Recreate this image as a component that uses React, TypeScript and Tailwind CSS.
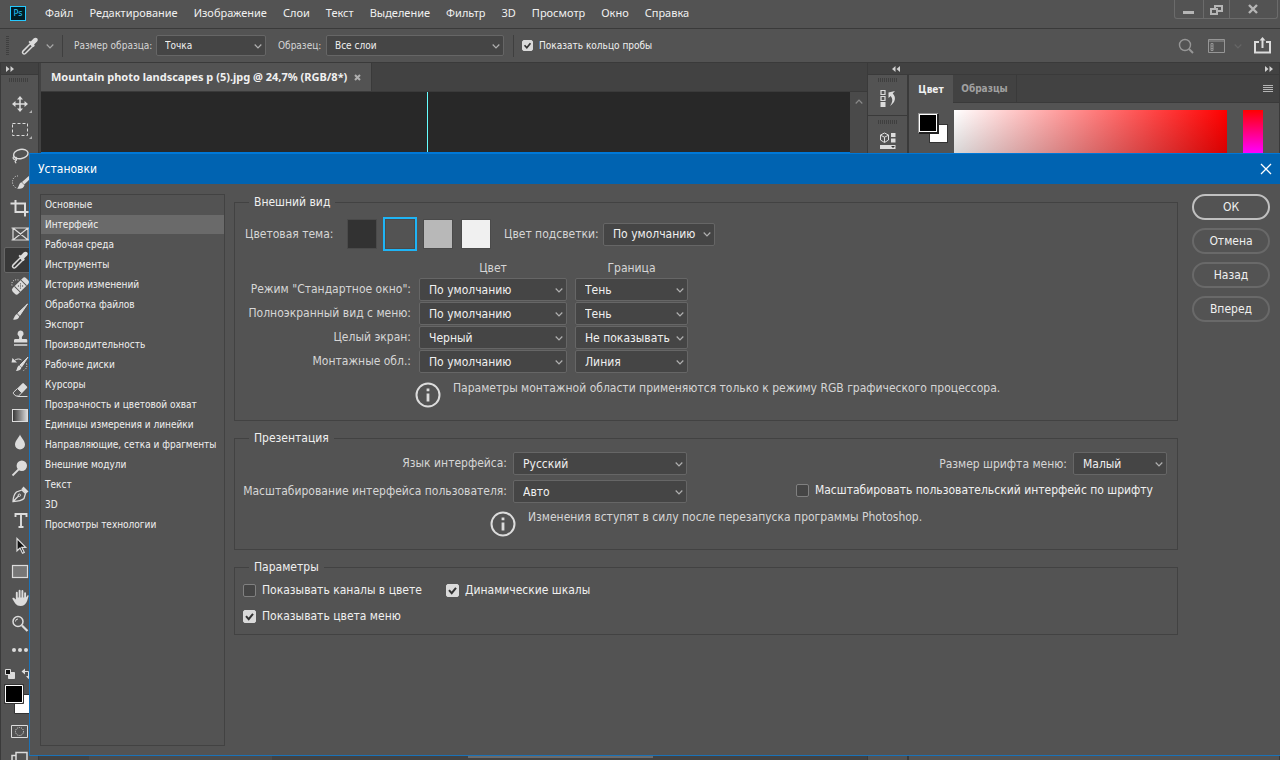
import React from 'react'
import clsx from 'clsx'

const MENU = [
  'Файл',
  'Редактирование',
  'Изображение',
  'Слои',
  'Текст',
  'Выделение',
  'Фильтр',
  '3D',
  'Просмотр',
  'Окно',
  'Справка',
]

const SECTIONS = [
  'Основные',
  'Интерфейс',
  'Рабочая среда',
  'Инструменты',
  'История изменений',
  'Обработка файлов',
  'Экспорт',
  'Производительность',
  'Рабочие диски',
  'Курсоры',
  'Прозрачность и цветовой охват',
  'Единицы измерения и линейки',
  'Направляющие, сетка и фрагменты',
  'Внешние модули',
  'Текст',
  '3D',
  'Просмотры технологии',
]

const SCREEN_MODES = [
  { id: 'standard', label: 'Режим "Стандартное окно":', color: 'По умолчанию', edge: 'Тень' },
  { id: 'fullmenu', label: 'Полноэкранный вид с меню:', color: 'По умолчанию', edge: 'Тень' },
  { id: 'full', label: 'Целый экран:', color: 'Черный', edge: 'Не показывать' },
  { id: 'artboards', label: 'Монтажные обл.:', color: 'По умолчанию', edge: 'Линия' },
]

const THEMES = [
  { name: 'darkest', className: 'bg-[#323232]' },
  { name: 'dark', className: 'bg-[#535353]' },
  { name: 'light', className: 'bg-[#b8b8b8]' },
  { name: 'lightest', className: 'bg-[#f0f0f0]' },
]

const EYEDROPPER = (
  <>
    <path d="M5 19.500c-.8-.8-.5-1.800 0-2.400l7.300-7.300 2.400 2.400-7.300 7.300c-.7.6-1.700.7-2.400 0z" fill="none" strokeWidth="1.500" />
    <path d="M10.500 8l1.300-1.200 1 .6 2.800-2.800c1-1 2.500-1.300 3.500-.3s.8 2.500-.2 3.500l-2.800 2.800.7 1.100-1.200 1.300z" fill="#dcdcdc" stroke="none" />
  </>
)

const TOOLS: { name: string; more?: boolean; active?: boolean; icon: React.ReactNode }[] = [
  {
    name: 'move',
    more: true,
    icon: (
      <>
        <path d="M12 6v12M6 12h12" strokeWidth="1.500" />
        <path d="M12 4l3 3.500H9zM12 20l3-3.500H9zM4 12l3.500-3v6zM20 12l-3.500-3v6z" fill="#dcdcdc" stroke="none" />
      </>
    ),
  },
  { name: 'marquee', more: true, icon: <rect x="4.500" y="5.500" width="15" height="12" strokeDasharray="3 2" /> },
  {
    name: 'lasso',
    icon: (
      <>
        <ellipse cx="12.800" cy="10" rx="7.300" ry="4.600" transform="rotate(-10 12.800 10)" strokeWidth="1.400" />
        <path d="M6 12.500c-1.500.8-1 2.800.5 2.800s2.300-1.300 1.200-2.200c1.500 1.500 1 3.200-.2 3.600s.3 1.800.6 2.600" strokeWidth="1.200" />
      </>
    ),
  },
  {
    name: 'quick selection',
    icon: (
      <>
        <path d="M10 6a5 6 0 1 0-1 12" strokeDasharray="1 1.400" />
        <path d="M22 5l-8 7 2.200 2.500L23 8z" fill="#dcdcdc" stroke="none" />
        <path d="M13.500 12.200l3 3.100c-1 3.200-4 4.200-7.500 3.200 2-.8 1.500-5.300 4.500-6.300z" fill="#dcdcdc" stroke="none" />
      </>
    ),
  },
  { name: 'crop', icon: <path d="M7.500 4v12h13M2.500 7.500H17v13" strokeWidth="2" /> },
  { name: 'frame', icon: <path d="M5 6h15v12H5zM5 6l15 12M20 6L5 18M3.500 6h3M18.500 6h3M3.500 18h3M18.500 18h3" strokeWidth="1.200" /> },
  { name: 'eyedropper', active: true, icon: EYEDROPPER },
  {
    name: 'healing brush',
    icon: (
      <>
        <path d="M4 11.500c-1-4 2-6.500 6.500-5.500" strokeDasharray="1 1.400" />
        <g transform="rotate(-45 12.500 12)">
          <rect x="3" y="8" width="19" height="8" rx="2.500" fill="#dcdcdc" stroke="none" />
          <path d="M8 8v8M17 8v8" stroke="#535353" />
          <path d="M10.500 10.500h1M13.500 10.500h1M12 12h1M10.500 13.500h1M13.500 13.500h1" stroke="#333" />
        </g>
      </>
    ),
  },
  {
    name: 'brush',
    icon: (
      <>
        <path d="M19.500 4L9.800 13.200l2 2.200z" fill="#dcdcdc" stroke="#dcdcdc" />
        <path d="M9 14l2.300 2.400c-.7 3-4 3.600-6.500 3.100 1.800-1 1.400-4.500 4.200-5.500z" fill="#dcdcdc" stroke="none" />
      </>
    ),
  },
  {
    name: 'clone stamp',
    icon: <path d="M12.500 4.500a3.200 3.200 0 0 1 2 5.600c-.8.900-.8 2.200-.3 3h3.600c1 0 1.500.5 1.500 1.500v2H6v-2c0-1 .5-1.500 1.500-1.500h3.400c.5-.8.5-2.100-.3-3a3.200 3.200 0 0 1 1.900-5.600zM6 18.300h13.300v1.400H6z" fill="#dcdcdc" stroke="none" />,
  },
  {
    name: 'history brush',
    icon: (
      <>
        <path d="M20 5l-8 8 1.800 1.800z" fill="#dcdcdc" />
        <path d="M11.300 13.300l2.200 2.300c-.7 2.600-3 3.600-5.700 3.200 1.500-.9 1-4.300 3.500-5.500z" fill="#dcdcdc" stroke="none" />
        <path d="M3.500 10.500l1-4.500 4.500 4.500z" fill="#dcdcdc" stroke="none" />
        <path d="M7 8c2.500-1.500 5-1.200 6.500 0" />
        <path d="M18.500 11.500c1 3 0 5.500-3 7" strokeDasharray="1 1.500" />
      </>
    ),
  },
  {
    name: 'eraser',
    icon: (
      <>
        <path d="M9.500 10.200L14.300 5.500q.8-.8 1.600 0l3 3q.8.8 0 1.600l-4.800 4.800z" fill="#dcdcdc" stroke="none" />
        <path d="M9.500 10.500l4.300 4.300-3.300 3.200H7.800l-2.200-2.200q-.8-.8 0-1.600z" />
        <path d="M9.500 18.500h10" />
      </>
    ),
  },
  {
    name: 'gradient',
    icon: (
      <>
        <defs>
          <linearGradient id="toolGradient">
            <stop offset="0" stopColor="#333" />
            <stop offset="1" stopColor="#ddd" />
          </linearGradient>
        </defs>
        <rect x="4.500" y="5.500" width="15" height="12" fill="url(#toolGradient)" />
      </>
    ),
  },
  { name: 'blur', icon: <path d="M12 4.500c1 3 5 6.300 5 10a5 5 0 0 1-10 0c0-3.700 4-7 5-10z" fill="#dcdcdc" stroke="none" /> },
  {
    name: 'dodge',
    icon: (
      <>
        <circle cx="13.800" cy="9.800" r="5.200" fill="#dcdcdc" stroke="none" />
        <path d="M11 13l-6.500 6.500" strokeWidth="1.800" />
      </>
    ),
  },
  {
    name: 'pen',
    icon: (
      <>
        <path d="M5 19.500c.2-4.500 1.200-7.500 3.500-9.500l5.500-2 3.500 3.500-1.500 5c-2 2-6.500 2.800-11 3zM5 19.500l5.800-5.800" strokeWidth="1.300" />
        <circle cx="11.300" cy="13.200" r="1.200" />
        <path d="M13.500 7l2-2.500 5 5-2.500 2z" fill="#dcdcdc" stroke="none" />
      </>
    ),
  },
  { name: 'type', icon: <path d="M7.500 9V6h11v3M13 6v13M10.500 19h5" strokeWidth="1.900" /> },
  { name: 'path selection', icon: <path d="M9 4.500v12.300l3-2.700 2.500 5.200 1.800-.9-2.500-5h3.900z" fill="#111" strokeWidth="1.200" /> },
  { name: 'rectangle', icon: <rect x="4.500" y="5.500" width="15" height="12" fill="#777" strokeWidth="1.200" /> },
  {
    name: 'hand',
    icon: (
      <>
        <path d="M8.800 12.500V6.800M11.600 12V4.800M14.400 12V5M17.100 13V7.200" strokeWidth="1.900" strokeLinecap="round" />
        <path d="M8 11.500h10l1.300-1.800c.7-.8 1.600-.2 1.200.8-1.200 3.200-1.700 9.500-8 9.500-4.500 0-5.500-3-8-7-.5-1 .8-1.600 1.600-1L8 13.500z" fill="#dcdcdc" stroke="none" />
      </>
    ),
  },
  {
    name: 'zoom',
    icon: (
      <>
        <circle cx="10" cy="9.500" r="5" strokeWidth="1.500" />
        <path d="M7.500 9.500A2.500 2.500 0 0 1 10 7" strokeWidth="1" />
        <path d="M14 13.500l5.500 5.500" strokeWidth="2.200" />
      </>
    ),
  },
  {
    name: 'edit toolbar',
    icon: (
      <g fill="#dcdcdc" stroke="none">
        <circle cx="6" cy="12" r="2" />
        <circle cx="12" cy="12" r="2" />
        <circle cx="18" cy="12" r="2" />
      </g>
    ),
  },
]

function Chevron({ className }: { className?: string }) {
  return (
    <svg className={className} width="8" height="6" viewBox="0 0 8 6" fill="none" stroke="currentColor" strokeWidth="1.200">
      <path d="M.7 1.500l3.300 3.300 3.300-3.300" />
    </svg>
  )
}

function Select({
  id,
  label,
  value,
  small,
  className,
}: {
  id?: string
  label?: string
  value: string
  small?: boolean
  className?: string
}) {
  return (
    <div className={clsx('relative', className)}>
      <select
        id={id}
        aria-label={label}
        className={clsx(
          'block w-full appearance-none rounded-[2px] border border-[#666] bg-[#454545] text-[#f0f0f0] outline-none',
          small ? 'h-[21px] pl-2 text-[10px]' : 'h-[23px] pl-[9px] text-xs leading-4',
        )}
      >
        <option>{value}</option>
      </select>
      <Chevron className="absolute top-1/2 right-1 -translate-y-1/2 text-[#b0b0b0] pointer-events-none" />
    </div>
  )
}

function Checkbox({
  label,
  checked = false,
  small,
}: {
  label: string
  checked?: boolean
  small?: boolean
}) {
  const [on, setOn] = React.useState(checked)

  return (
    <label className="flex items-center gap-[6px] text-[#f0f0f0]">
      <span className={clsx('grid shrink-0', small ? 'size-[11px]' : 'size-[13px]')}>
        <input
          type="checkbox"
          checked={on}
          onChange={(e) => setOn(e.currentTarget.checked)}
          className="col-start-1 row-start-1 appearance-none rounded-[2px] border border-[#808080] bg-[#454545] checked:border-[#dadada] checked:bg-[#dadada]"
        />
        {on && (
          <svg className="w-full h-full col-start-1 row-start-1 pointer-events-none" viewBox="0 0 13 13" fill="none" stroke="#333" strokeWidth="2">
            <path d="M3 6.200l2.700 3L10 3.800" />
          </svg>
        )}
      </span>
      {label}
    </label>
  )
}

function Group({
  title,
  className,
  children,
}: {
  title: string
  className?: string
  children: React.ReactNode
}) {
  return (
    <fieldset className={clsx('min-w-0 border border-[#424242]', className)}>
      <legend className="ml-[14px] px-[5px] leading-4 text-[#f0f0f0]">{title}</legend>
      {children}
    </fieldset>
  )
}

function Info({ className, children }: { className?: string; children: React.ReactNode }) {
  return (
    <div className={clsx('flex items-start gap-3', className)}>
      <svg className="shrink-0" width="26" height="26" viewBox="0 0 26 26" fill="none" stroke="#dcdcdc">
        <circle cx="13" cy="13" r="11.500" strokeWidth="2" />
        <path d="M13 11.500v8M13 6.500v2.800" strokeWidth="2.800" />
      </svg>
      <p className="leading-3">{children}</p>
    </div>
  )
}

function Grip({ className }: { className?: string }) {
  return (
    <div
      className={clsx(
        'h-[4px] w-5 shrink-0 bg-[repeating-linear-gradient(90deg,#3f3f3f_0_1px,transparent_1px_2px)]',
        className,
      )}
    />
  )
}

function DoubleArrow({ className }: { className?: string }) {
  return (
    <svg className={className} width="8" height="6" viewBox="0 0 8 6" fill="#d0d0d0">
      <path d="M0 0l3.500 3L0 6zM4.500 0L8 3 4.500 6z" />
    </svg>
  )
}

function TopBar() {
  return (
    <header className="flex h-7 shrink-0 items-start justify-between pl-[10px]">
      <div className="flex items-center">
        <div className="flex mt-[5px] h-[15px] w-4 items-center justify-center border border-[#26c9ff] bg-[#001d26] text-[9px] leading-none text-[#26c9ff]">
          Ps
        </div>
        <nav className="mt-[5px] ml-[19px] flex gap-4 font-['Noto_Sans',sans-serif] text-[11px] leading-4 text-[#f0f0f0]">
          {MENU.map((item) => (
            <button key={item}>{item}</button>
          ))}
        </nav>
      </div>
      <div className="mr-[2px] flex h-[19px] rounded-b-[3px] border border-t-0 border-[#6b6b6b] text-[#b5b5b5]">
        <button aria-label="minimize" className="w-7">
          <svg width="27" height="18" fill="currentColor">
            <path d="M8 11h11v3H8z" />
          </svg>
        </button>
        <button aria-label="restore" className="w-[27px] border-x border-[#6b6b6b]">
          <svg width="25" height="18" viewBox="0 0 25 18" fill="none" stroke="currentColor" strokeWidth="2">
            <path d="M11 8V6h7v5h-4" />
            <path d="M7 9h6v5H7z" />
          </svg>
        </button>
        <button aria-label="close" className="w-[47px]">
          <svg width="47" height="18" viewBox="0 0 47 18" fill="none" stroke="currentColor" strokeWidth="2.400">
            <path d="M19 5l8 8M27 5l-8 8" />
          </svg>
        </button>
      </div>
    </header>
  )
}

function OptionsBar() {
  return (
    <div className="flex h-[35px] shrink-0 items-center border-y border-[#3a3a3a] pl-[6px] text-[10px] text-[#d6d6d6]">
      <div className="h-5 w-[3px] bg-[repeating-linear-gradient(#3f3f3f_0_1px,transparent_1px_2px)]" />
      <svg className="ml-[9px]" width="24" height="24" viewBox="0 0 24 24" fill="none" stroke="#dcdcdc">
        {EYEDROPPER}
      </svg>
      <Chevron className="ml-1 text-[#a8a8a8]" />
      <div className="ml-2 h-[22px] w-px bg-[#3f3f3f]" />
      <label htmlFor="sampleSize" className="ml-[11px] w-[82px] whitespace-nowrap">
        Размер образца:
      </label>
      <Select small id="sampleSize" value="Точка" className="w-[110px]" />
      <label htmlFor="sample" className="ml-3 w-12 whitespace-nowrap">
        Образец:
      </label>
      <Select small id="sample" value="Все слои" className="w-[178px]" />
      <div className="ml-[9px] mr-2 h-[22px] w-px bg-[#3f3f3f]" />
      <Checkbox small checked label="Показать кольцо пробы" />
      <div className="ml-auto mr-[9px] flex items-center text-[#969696]">
        <svg width="16" height="16" viewBox="0 0 16 16" fill="none" stroke="currentColor">
          <circle cx="7" cy="7" r="5.500" strokeWidth="1.400" />
          <path d="M11 11l4 4" strokeWidth="2" />
        </svg>
        <svg className="ml-[14px]" width="17" height="14" viewBox="0 0 17 14" fill="none" stroke="currentColor">
          <path d="M.5.500h16v13H.5zM.5 2h16M3 4.500h2v7H3zM3 7h2M3 9.500h2" />
        </svg>
        <Chevron className="ml-[9px] text-[#666]" />
        <svg className="ml-3" width="17" height="17" viewBox="0 0 17 17" fill="none" stroke="#dcdcdc" strokeWidth="2">
          <path d="M5 5H1v10.500h15V5h-4M8.500 11V2" />
          <path d="M8.500 0l3 3.500h-6z" fill="#dcdcdc" stroke="none" />
        </svg>
      </div>
    </div>
  )
}

function Toolbar() {
  return (
    <aside className="flex w-[39px] shrink-0 flex-col border-x border-[#3a3a3a] bg-[#535353]">
      <div className="flex h-3 shrink-0 items-center border-b border-[#3a3a3a] bg-[#424242] pl-[5px]">
        <DoubleArrow />
      </div>
      <Grip className="mt-[3px] mb-[9px] ml-2" />
      {TOOLS.map((tool) => (
        <button
          key={tool.name}
          aria-label={tool.name}
          className={clsx(
            'relative ml-[3px] flex h-[26px] w-8 shrink-0 items-center pl-1',
            tool.active && 'rounded-[2px] border border-[#666] bg-[#383838] pl-[3px]',
          )}
        >
          <svg width="24" height="24" viewBox="0 0 24 24" fill="none" stroke="#dcdcdc">
            {tool.icon}
          </svg>
          {tool.more && (
            <svg className="absolute right-1 bottom-1" width="3" height="3" fill="#b0b0b0">
              <path d="M3 0v3H0z" />
            </svg>
          )}
        </button>
      ))}
      <svg className="mt-1 shrink-0" width="36" height="52" viewBox="1 667 36 52" fill="none" stroke="#dcdcdc">
        <path d="M8.500 672.500h6v6h-6z" fill="#dcdcdc" />
        <path d="M5.500 669.500h5v5h-5z" fill="#111" />
        <path d="M24 671.500h4.500v6" />
        <path d="M21.500 671.500l3.500-3v6zM26 676h5l-2.500 3z" fill="#dcdcdc" stroke="none" />
        <path d="M14.500 694.500h18v19h-18z" fill="#fff" stroke="#333" />
        <path d="M4.500 684.500h19v19h-19z" fill="#333" stroke="#333" />
        <path d="M5.500 685.500h17v17h-17z" fill="#000" stroke="#fff" />
      </svg>
      <svg className="mt-[6px] ml-[10px] shrink-0" width="18" height="14" viewBox="0 0 18 14" fill="none" stroke="#dcdcdc">
        <path d="M.5.500h16v12H.5z" />
        <circle cx="8.500" cy="6.500" r="4" strokeDasharray="1 1" />
      </svg>
      <svg className="mt-3 ml-[10px] shrink-0" width="18" height="14" viewBox="0 0 18 14" fill="none" stroke="#dcdcdc" strokeWidth="1.500">
        <path d="M5 1.500h11V13H5zM5 4.500H1V13" />
      </svg>
    </aside>
  )
}

function Document() {
  return (
    <main className="ml-[2px] flex min-w-0 flex-1 flex-col">
      <div className="flex h-[29px] shrink-0 border-b border-[#3a3a3a] bg-[#424242]">
        <div className="flex items-center border-r border-[#3a3a3a] bg-[#535353] px-[10px] font-['Noto_Sans',sans-serif] text-[11px] font-bold text-[#f0f0f0]">
          Mountain photo landscapes p (5).jpg @ 24,7% (RGB/8*)
          <button aria-label="close tab" className="ml-[7px]">
            <svg width="7" height="7" viewBox="0 0 7 7" stroke="#b0b0b0" strokeWidth="2">
              <path d="M1 1l5 5M6 1L1 6" />
            </svg>
          </button>
        </div>
      </div>
      <div className="flex flex-1">
        <div className="flex-1 bg-[#282828]">
          <div className="flex h-[61px] border-b border-[#0078d7]">
            <div className="w-[387px] border-r border-[#66ffff]" />
          </div>
        </div>
        <div className="flex w-[17px] justify-center bg-[#4a4a4a] pt-[7px]">
          <Chevron className="rotate-180 text-[#8a8a8a]" />
        </div>
      </div>
      <div className="flex h-1 shrink-0 bg-[#424242]">
        <div className="ml-12 w-[183px] bg-[#4b4b4b]" />
        <div className="ml-[196px] h-[2px] w-[185px] bg-[#6b6b6b]" />
      </div>
    </main>
  )
}

function Panels() {
  return (
    <div className="flex w-[413px] shrink-0 flex-col border-x border-[#3a3a3a] bg-[#424242]">
      <div className="flex h-3 shrink-0 items-center justify-between border-b border-[#3a3a3a] pr-[6px] pl-6">
        <DoubleArrow className="rotate-180" />
        <DoubleArrow />
      </div>
      <div className="flex flex-1">
        <div className="flex w-[41px] flex-col items-center border-r-2 border-[#3a3a3a] bg-[#535353]">
          <Grip className="mt-[3px]" />
          <svg className="mt-[7px] mb-[8px] shrink-0" width="18" height="18" viewBox="0 0 18 18" fill="none" stroke="#dcdcdc">
            <path d="M2 1.500h4v4H2zM2 7.500h4v4H2z" strokeWidth="1.200" />
            <path d="M1.500 13h5v5h-5z" fill="#dcdcdc" stroke="none" />
            <path d="M9.500 3.500L16 2l-2.300 2.500c3.800 3.500 2.800 9-2.700 12.500 2.800-4 3-7 .7-10L9.500 9z" fill="#dcdcdc" stroke="none" />
          </svg>
          <div className="w-full h-px bg-[#3a3a3a]" />
          <Grip className="mt-[4px]" />
          <svg className="mt-[8px]" width="18" height="18" viewBox="0 0 18 18" fill="none" stroke="#dcdcdc">
            <path d="M5.500 1l4 2v5l-4 2.500-4-2.500V3zM1.500 3.200l4 2 4-2M5.500 5.200v5" />
            <path d="M12 1h4.500v4H12zM12 6.500h4.500v4H12zM1 13h15.500v4H1z" fill="#dcdcdc" stroke="none" />
            <path d="M12 14h4l-2 2z" fill="#333" stroke="none" />
          </svg>
        </div>
        <div className="flex flex-1 flex-col bg-[#535353]">
          <div className="flex h-7 bg-[#424242] text-[10px] font-bold">
            <button className="w-11 bg-[#535353] text-[#f0f0f0]">Цвет</button>
            <button className="w-16 border-r border-b border-[#3a3a3a] text-[#a0a0a0]">Образцы</button>
            <div className="flex flex-1 items-center justify-end border-b border-[#3a3a3a] pr-[6px]">
              <svg width="10" height="7" stroke="#b5b5b5">
                <path d="M0 .5h10M0 2.500h10M0 4.500h10M0 6.500h10" />
              </svg>
            </div>
          </div>
          <div className="flex h-[51px] overflow-hidden pt-[7px] pl-[9px]">
            <svg className="mt-[3px]" width="31" height="31" viewBox="0 0 31 31">
              <path d="M11 11h19v19H11z" fill="#333" />
              <path d="M12 12h17v17H12z" fill="#fff" />
              <path d="M0 0h20v20H0z" fill="#909090" />
              <path d="M1 1h20v20H1z" fill="#222" />
              <path d="M1 1h18v18H1z" fill="#fff" />
              <path d="M2 2h16v16H2z" fill="#000" />
            </svg>
            <div className="ml-[5px] h-[280px] flex-1 bg-[linear-gradient(to_top,#000,transparent),linear-gradient(to_right,#fff,#f00)]" />
            <div className="mr-4 ml-4 h-[258px] w-5 bg-[linear-gradient(#f00,#f0f,#00f,#0ff,#0f0,#ff0,#f00)]" />
          </div>
        </div>
      </div>
    </div>
  )
}

function Preferences() {
  const [section, setSection] = React.useState('Интерфейс')
  const [theme, setTheme] = React.useState('dark')

  return (
    <div
      role="dialog"
      aria-labelledby="prefsTitle"
      className="absolute top-[153px] right-0 bottom-[4px] left-[29px] flex flex-col border-b border-l border-[#1a72b8] bg-[#535353] text-xs text-[#d6d6d6]"
    >
      <div className="flex h-[31px] shrink-0 items-center justify-between border-t border-[#0078d7] bg-[#0063b1] px-2 text-white">
        <h1 id="prefsTitle">Установки</h1>
        <button aria-label="close">
          <svg width="12" height="12" viewBox="0 0 12 12" stroke="#fff" strokeWidth="1.300">
            <path d="M1 1l10 10M11 1L1 11" />
          </svg>
        </button>
      </div>

      <div className="flex min-h-0 flex-1 px-[10px] pt-[10px] pb-[9px]">
        <ul className="w-[185px] shrink-0 border border-[#424242] text-[10px] leading-[19px] text-[#f0f0f0]">
          {SECTIONS.map((item) => (
            <li key={item} className="mb-px">
              <button
                onClick={() => setSection(item)}
                className={clsx('block w-full pl-1 text-left whitespace-nowrap', item === section && 'bg-[#6a6a6a]')}
              >
                {item}
              </button>
            </li>
          ))}
        </ul>

        <div className="ml-[9px] flex min-w-0 flex-1 flex-col gap-[9px]">
          <Group title="Внешний вид" className="pb-3">
            <div className="mt-[9px] flex h-[30px] items-center pl-[10px]">
              <span className="w-[102px]">Цветовая тема:</span>
              <div className="flex gap-2">
                {THEMES.map((t) => (
                  <input
                    key={t.name}
                    type="radio"
                    name="theme"
                    aria-label={t.name}
                    checked={theme === t.name}
                    onChange={() => setTheme(t.name)}
                    className={clsx(
                      'size-[30px] appearance-none border border-[#4a4a4a] checked:outline-2 checked:outline-[#1fb4f5]',
                      t.className,
                    )}
                  />
                ))}
              </div>
              <label htmlFor="highlight" className="ml-[13px] w-[99px] whitespace-nowrap">
                Цвет подсветки:
              </label>
              <Select id="highlight" value="По умолчанию" className="w-[112px]" />
            </div>

            <div className="mt-[11px] grid grid-cols-[176px_148px_113px] gap-x-2 gap-y-px">
              <span className="col-start-2 mb-[1px] text-center">Цвет</span>
              <span className="text-center">Граница</span>
              {SCREEN_MODES.map((mode) => (
                <React.Fragment key={mode.id}>
                  <label htmlFor={mode.id} className="text-right leading-[23px] whitespace-nowrap">
                    {mode.label}
                  </label>
                  <Select id={mode.id} value={mode.color} />
                  <Select label={`${mode.label} Граница`} value={mode.edge} />
                </React.Fragment>
              ))}
            </div>

            <Info className="mt-[9px] ml-[180px]">
              Параметры монтажной области применяются только к режиму RGB графического процессора.
            </Info>
          </Group>

          <Group title="Презентация" className="pb-3">
            <div className="mt-[6px] flex items-start justify-between">
              <div className="grid grid-cols-[272px_174px] gap-x-[6px] gap-y-[5px]">
                <label htmlFor="language" className="text-right leading-[23px]">
                  Язык интерфейса:
                </label>
                <Select id="language" value="Русский" />
                <label htmlFor="scaling" className="text-right leading-[23px] whitespace-nowrap">
                  Масштабирование интерфейса пользователя:
                </label>
                <Select id="scaling" value="Авто" />
              </div>
              <div className="flex flex-col items-end gap-[7px] pr-[10px]">
                <div className="flex items-center gap-[6px]">
                  <label htmlFor="fontSize">Размер шрифта меню:</label>
                  <Select id="fontSize" value="Малый" className="w-[94px]" />
                </div>
                <div className="pr-[14px]">
                  <Checkbox label="Масштабировать пользовательский интерфейс по шрифту" />
                </div>
              </div>
            </div>
            <Info className="mt-2 ml-[255px]">
              Изменения вступят в силу после перезапуска программы Photoshop.
            </Info>
          </Group>

          <Group title="Параметры" className="pb-[10px]">
            <div className="mt-[7px] grid grid-cols-[197px_auto] justify-start gap-x-[6px] gap-y-[10px] pl-2">
              <Checkbox label="Показывать каналы в цвете" />
              <Checkbox checked label="Динамические шкалы" />
              <Checkbox checked label="Показывать цвета меню" />
            </div>
          </Group>
        </div>

        <div className="ml-[14px] flex w-[78px] shrink-0 flex-col gap-2 text-[#f0f0f0]">
          <button className="h-[26px] rounded-full border-2 border-[#c0c0c0]">ОК</button>
          <button className="h-[26px] rounded-full border-2 border-[#696969]">Отмена</button>
          <button className="h-[26px] rounded-full border-2 border-[#696969]">Назад</button>
          <button className="h-[26px] rounded-full border-2 border-[#696969]">Вперед</button>
        </div>
      </div>
    </div>
  )
}

export default function App() {
  return (
    <div className="relative flex h-screen flex-col overflow-hidden bg-[#535353] font-['DejaVu_Sans_Condensed',sans-serif]">
      <TopBar />
      <OptionsBar />
      <div className="flex min-h-0 flex-1 overflow-hidden bg-[#424242]">
        <Toolbar />
        <Document />
        <Panels />
      </div>
      <Preferences />
    </div>
  )
}
